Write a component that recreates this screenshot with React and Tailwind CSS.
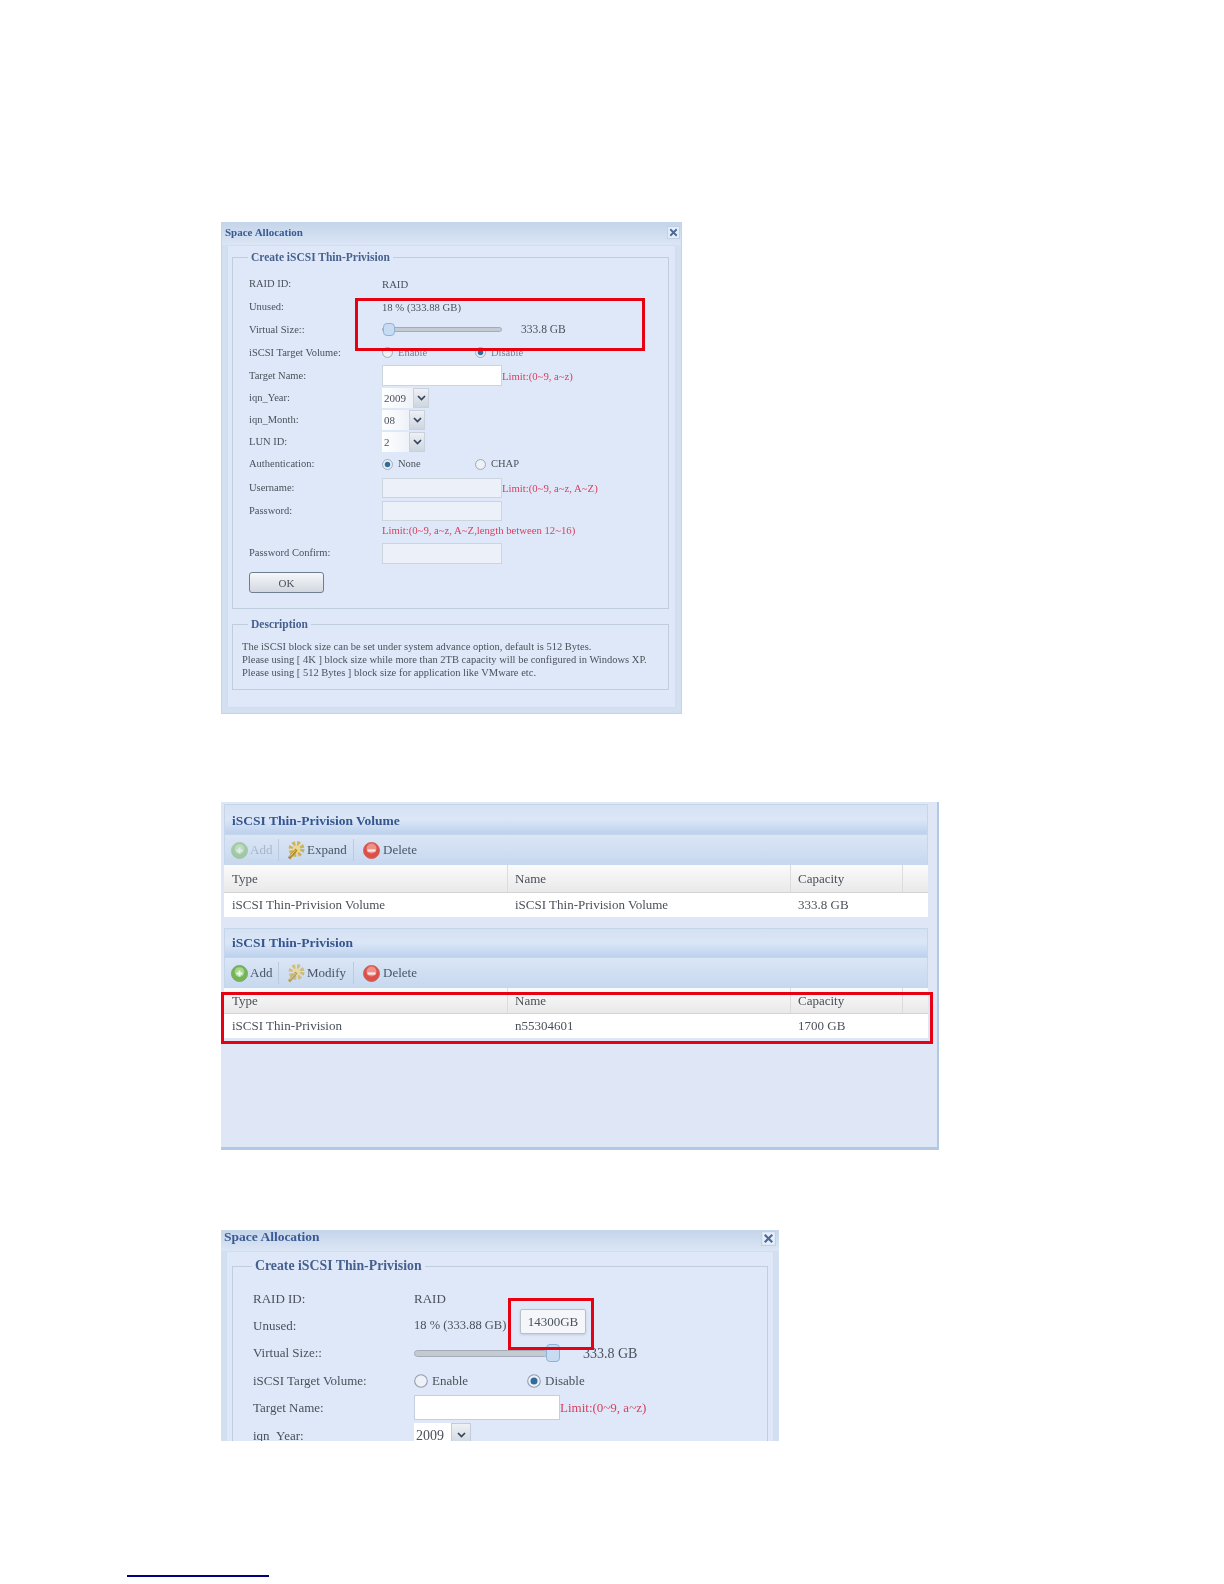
const Close = ({ size }) => (
  <svg width={size} height={size} viewBox="0 0 12 12" className="block">
    <rect x="0.5" y="0.5" width="11" height="11" fill="#e6eefa" stroke="#c2d2e6" />
    <path d="M3 3l6 6M9 3l-6 6" stroke="#4a6a97" strokeWidth="1.7" />
  </svg>
);

const Radio = ({ checked, size = 11 }) => (
  <svg width={size} height={size} viewBox="0 0 12 12" className="block shrink-0">
    <circle cx="6" cy="6" r="5.4" fill="#eef1f6" stroke="#8f9cad" strokeWidth="0.9" />
    {checked && <circle cx="6" cy="6" r="3" fill="#2f6d9f" />}
  </svg>
);

const Chevron = () => (
  <svg width="9" height="6" viewBox="0 0 9 6" className="block">
    <path d="M1 1l3.5 3.5L8 1" fill="none" stroke="#33445c" strokeWidth="1.7" />
  </svg>
);

const AddIcon = ({ off }) => (
  <svg width="17" height="17" viewBox="0 0 17 17" className={off ? 'block opacity-50' : 'block'}>
    <circle cx="8.5" cy="8.5" r="8" fill="#74b556" stroke="#79ab66" />
    <circle cx="8.5" cy="7" r="4.8" fill="#a6d68f" />
    <path d="M8.5 5.5v6M5.5 8.5h6" stroke="#eef8e8" strokeWidth="2" />
  </svg>
);

const DeleteIcon = () => (
  <svg width="17" height="17" viewBox="0 0 17 17" className="block">
    <circle cx="8.5" cy="8.5" r="8" fill="#dd5049" stroke="#d0645d" />
    <circle cx="8.5" cy="6.5" r="5" fill="#ee918a" />
    <path d="M4.5 8.5h8" stroke="#fbe9e7" strokeWidth="2.2" />
  </svg>
);

const GearIcon = ({ off }) => (
  <svg width="19" height="20" viewBox="0 0 19 20" className={off ? 'block opacity-75' : 'block'}>
    <circle cx="10.5" cy="9" r="5.5" fill="none" stroke="#cdb35a" strokeWidth="5" strokeDasharray="2.6 1.7" />
    <circle cx="10.5" cy="9" r="3.8" fill="#ecd98a" />
    <path d="M3 18.5l7.5-9" stroke="#b4892b" strokeWidth="2.8" />
    <path d="M4 16.5l5.5-6.5" stroke="#efdc9a" strokeWidth="0.8" />
  </svg>
);

const Row = ({ label, children, className }) => (
  <div className={`flex items-center ${className}`}>
    <div className="w-[133px] shrink-0 text-[10.5px] text-[#4a515b]">{label}</div>
    {children}
  </div>
);

const Input = ({ className }) => (
  <div className={`w-[120px] border border-[#cbd4df] ${className}`}></div>
);

const Select = ({ value, width }) => (
  <div className={`flex h-[20px] items-center ${width}`}>
    <div className="flex h-full flex-1 items-center bg-linear-to-r from-white to-[#eef2f8] pl-[2px] text-[11px] text-[#4a515b]">{value}</div>
    <div className="flex h-full w-[16px] items-center justify-center border border-[#c9d1dc] bg-linear-to-b from-[#eef1f5] to-[#cdd5df]">
      <Chevron />
    </div>
  </div>
);

const RadioPair = ({ a, b, aOn, faded }) => (
  <div className="flex items-center text-[10.5px] text-[#4a515b]">
    <div className="flex w-[93px] items-center gap-[5px]">
      <Radio checked={aOn} />
      <span className={faded ? 'opacity-70' : ''}>{a}</span>
    </div>
    <div className="flex items-center gap-[5px]">
      <Radio checked={!aOn} />
      <span className={faded ? 'opacity-70' : ''}>{b}</span>
    </div>
  </div>
);

const Limit = ({ children }) => <span className="text-[10.7px] text-[#d9405f]">{children}</span>;

const SpaceDialog = () => (
  <div className="relative ml-[221px] h-[492px] w-[461px] border border-[#c3d5ea] bg-[#d3e0f2] blur-[0.45px]">
    <div className="flex h-[22px] items-center justify-between bg-linear-to-b from-[#c5d5ea] to-[#dbe6f5] pb-[3px] pl-[3px] pr-[1px]">
      <span className="text-[11px] font-bold text-[#3b5a94]">Space Allocation</span>
      <Close size={13} />
    </div>
    <div className="mx-[5px] h-[463px] border border-[#cfdff1] bg-[#dfe8f8] pl-[4px] pr-[6px]">
      <fieldset className="mt-[3px] h-[360px] border border-[#bfcddd] pl-[16px]">
        <legend className="ml-[-1px] px-[3px] text-[11.5px] font-bold text-[#47618f]">Create iSCSI Thin-Privision</legend>
        <div className="pt-[7px]">
          <Row label="RAID ID:" className="h-[22px]"><span className="text-[10.7px] text-[#4a515b]">RAID</span></Row>
          <Row label="Unused:" className="h-[23px]"><span className="text-[10.7px] text-[#4a515b]">18 % (333.88 GB)</span></Row>
          <Row label="Virtual Size::" className="h-[23px]">
            <div className="relative h-[5px] w-[120px] rounded-sm border border-[#a4adb7] bg-[#c3cad2]">
              <div className="absolute left-0 top-[-5px] h-[13px] w-[12px] rounded-sm border border-[#8fb2d8] bg-[#c7dcf3]"></div>
            </div>
            <span className="ml-[19px] text-[11.5px] text-[#4a515b]">333.8 GB</span>
          </Row>
          <Row label="iSCSI Target Volume:" className="h-[23px]"><RadioPair a="Enable" b="Disable" faded /></Row>
          <Row label="Target Name:" className="h-[23px]">
            <Input className="h-[21px] bg-white" />
            <Limit>Limit:(0~9, a~z)</Limit>
          </Row>
          <Row label="iqn_Year:" className="h-[22px]"><Select value="2009" width="w-[47px]" /></Row>
          <Row label="iqn_Month:" className="h-[22px]"><Select value="08" width="w-[43px]" /></Row>
          <Row label="LUN ID:" className="h-[22px]"><Select value="2" width="w-[43px]" /></Row>
          <Row label="Authentication:" className="h-[22px]"><RadioPair a="None" b="CHAP" aOn /></Row>
          <Row label="Username:" className="h-[25px]">
            <Input className="h-[20px] bg-[#ebf0f9]" />
            <Limit>Limit:(0~9, a~z, A~Z)</Limit>
          </Row>
          <Row label="Password:" className="h-[22px]"><Input className="h-[20px] bg-[#ebf0f9]" /></Row>
          <div className="flex h-[15px] items-center pl-[133px]">
            <Limit>Limit:(0~9, a~z, A~Z,length between 12~16)</Limit>
          </div>
          <Row label="Password Confirm:" className="h-[32px]"><Input className="h-[21px] bg-[#ebf0f9]" /></Row>
          <button className="mt-[3px] block h-[21px] w-[75px] rounded-[3px] border border-[#6f7f92] bg-linear-to-b from-[#f6f7f9] to-[#d2d8e0] text-center text-[11px] text-[#4a515b]">OK</button>
        </div>
      </fieldset>
      <fieldset className="mt-[7px] h-[74px] border border-[#bfcddd] pl-[9px]">
        <legend className="ml-[6px] px-[3px] text-[11.5px] font-bold text-[#47618f]">Description</legend>
        <div className="pt-[7px] text-[10.5px] leading-[13px] text-[#4a515b]">
          <div>The iSCSI block size can be set under system advance option, default is 512 Bytes.</div>
          <div>Please using [ 4K ] block size while more than 2TB capacity will be configured in Windows XP.</div>
          <div>Please using [ 512 Bytes ] block size for application like VMware etc.</div>
        </div>
      </fieldset>
    </div>
    <div className="pointer-events-none absolute left-[133px] top-[75px] h-[53px] w-[290px] border-[3px] border-[#e60012]"></div>
  </div>
);

const SectionHeader = ({ title, className }) => (
  <div className={`flex items-center border border-[#c5d5ea] bg-linear-to-b from-[#d4e2f4] via-[#dbe6f6] to-[#bcd1ed] pl-[7px] text-[13.5px] font-bold text-[#34558f] ${className}`}>
    {title}
  </div>
);

const Toolbar = ({ first, second, addOff }) => (
  <div className="flex h-[30px] items-center border-x border-[#c5d5ea] bg-linear-to-b from-[#dbe6f6] to-[#c6d8ef] pl-[6px] text-[13px] text-[#4a5667]">
    <AddIcon off={addOff} />
    <span className={`ml-[2px] w-[28px] ${addOff ? 'opacity-30' : ''}`}>{first}</span>
    <div className="h-[22px] w-px bg-[#bccadc]"></div>
    <div className="ml-[7px]"><GearIcon off={!addOff} /></div>
    <span className="ml-[2px] w-[46px]">{second}</span>
    <div className="h-[22px] w-px bg-[#bccadc]"></div>
    <div className="ml-[9px]"><DeleteIcon /></div>
    <span className="ml-[3px]">Delete</span>
  </div>
);

const Table = ({ type, name, capacity, headH }) => (
  <div className="text-[13px] text-[#4a515b]">
    <div className={`flex items-center border-b border-[#d4d4d4] bg-linear-to-b from-[#fbfbfb] to-[#e9e9e9] ${headH}`}>
      <div className="flex h-full w-[284px] items-center border-r border-[#dcdcdc] pl-[8px]">Type</div>
      <div className="flex h-full w-[283px] items-center border-r border-[#dcdcdc] pl-[7px]">Name</div>
      <div className="flex h-full w-[112px] items-center border-r border-[#dcdcdc] pl-[7px]">Capacity</div>
      <div className="flex-1"></div>
    </div>
    <div className="flex h-[24px] items-center bg-white">
      <div className="w-[284px] pl-[8px]">{type}</div>
      <div className="w-[283px] pl-[7px]">{name}</div>
      <div className="w-[112px] pl-[7px]">{capacity}</div>
    </div>
  </div>
);

const VolumePanel = () => (
  <div className="relative ml-[221px] mt-[88px] h-[348px] w-[718px] border-b-[3px] border-r-[2px] border-[#b3c8e2] bg-[#dfe7f7] pl-[3px] pr-[9px] pt-[2px] blur-[0.45px]">
    <SectionHeader title="iSCSI Thin-Privision Volume" className="h-[31px] pt-[3px]" />
    <Toolbar first="Add" second="Expand" addOff />
    <Table type="iSCSI Thin-Privision Volume" name="iSCSI Thin-Privision Volume" capacity="333.8 GB" headH="h-[28px]" />
    <div className="h-[11px]"></div>
    <SectionHeader title="iSCSI Thin-Privision" className="h-[30px] pt-[1px]" />
    <Toolbar first="Add" second="Modify" />
    <Table type="iSCSI Thin-Privision" name="n55304601" capacity="1700 GB" headH="h-[26px]" />
    <div className="pointer-events-none absolute left-0 top-[190px] h-[52px] w-[712px] border-[3px] border-[#e60012]"></div>
  </div>
);

const Row3 = ({ label, children }) => (
  <div className="flex h-[27.4px] items-center">
    <div className="w-[161px] shrink-0 text-[13px] text-[#4a515b]">{label}</div>
    {children}
  </div>
);

const SliderDialog = () => (
  <div className="relative ml-[221px] mt-[80px] h-[211px] w-[558px] overflow-hidden bg-[#d3e0f2] px-[5px] blur-[0.45px]">
    <div className="-mx-[5px] flex h-[21px] justify-between bg-linear-to-b from-[#c5d5ea] to-[#dbe6f5] px-[3px] pt-[1px]">
      <span className="-mt-[1px] text-[13.5px] font-bold leading-[13px] text-[#3b5a94]">Space Allocation</span>
      <Close size={15} />
    </div>
    <div className="h-[200px] border border-[#cfdff1] bg-[#dfe8f8] px-[5px]">
      <fieldset className="mt-[4px] h-[240px] border border-[#bfcddd] pl-[20px]">
        <legend className="ml-[-1px] px-[3px] text-[13.8px] font-bold text-[#47618f]">Create iSCSI Thin-Privision</legend>
        <div className="pt-[8px]">
          <Row3 label="RAID ID:"><span className="text-[13px] text-[#4a515b]">RAID</span></Row3>
          <Row3 label="Unused:"><span className="text-[12.5px] text-[#4a515b]">18 % (333.88 GB)</span></Row3>
          <Row3 label="Virtual Size::">
            <div className="relative h-[7px] w-[134px] rounded-sm border border-[#a4adb7] bg-[#c3cad2]">
              <div className="absolute right-[-13px] top-[-7px] h-[18px] w-[14px] rounded-sm border border-[#8fb2d8] bg-[#c7dcf3]"></div>
            </div>
            <span className="ml-[35px] text-[14px] text-[#4a515b]">333.8 GB</span>
          </Row3>
          <Row3 label="iSCSI Target Volume:">
            <div className="flex items-center text-[13px] text-[#4a515b]">
              <div className="flex w-[113px] items-center gap-[4px]"><Radio size={14} /><span>Enable</span></div>
              <div className="flex items-center gap-[4px]"><Radio checked size={14} /><span>Disable</span></div>
            </div>
          </Row3>
          <Row3 label="Target Name:">
            <div className="h-[25px] w-[146px] border border-[#c6cfdb] bg-white"></div>
            <span className="text-[13px] text-[#d9405f]">Limit:(0~9, a~z)</span>
          </Row3>
          <Row3 label="iqn_Year:">
            <div className="flex h-[24px] w-[57px] items-center">
              <div className="flex h-full flex-1 items-center bg-white pl-[2px] text-[14px] text-[#4a515b]">2009</div>
              <div className="flex h-full w-[20px] items-center justify-center border border-[#c3ccd8] bg-linear-to-b from-[#eef1f5] to-[#cdd5df]"><Chevron /></div>
            </div>
          </Row3>
        </div>
      </fieldset>
    </div>
    <div className="absolute left-[299px] top-[79px] flex h-[25px] w-[66px] items-center justify-center rounded-[2px] border border-[#b9c0ca] bg-[#f4f6fa] text-[13px] text-[#4a515b] shadow-sm">14300GB</div>
    <div className="pointer-events-none absolute left-[287px] top-[68px] h-[52px] w-[86px] border-[3px] border-[#e60012]"></div>
  </div>
);

export default function App() {
  return (
    <div className="h-[1584px] w-[1224px] overflow-hidden bg-white pt-[222px] font-['Liberation_Serif',serif]">
      <SpaceDialog />
      <VolumePanel />
      <SliderDialog />
      <div className="ml-[127px] mt-[134px] h-[2px] w-[142px] bg-[#000080]"></div>
    </div>
  );
}
